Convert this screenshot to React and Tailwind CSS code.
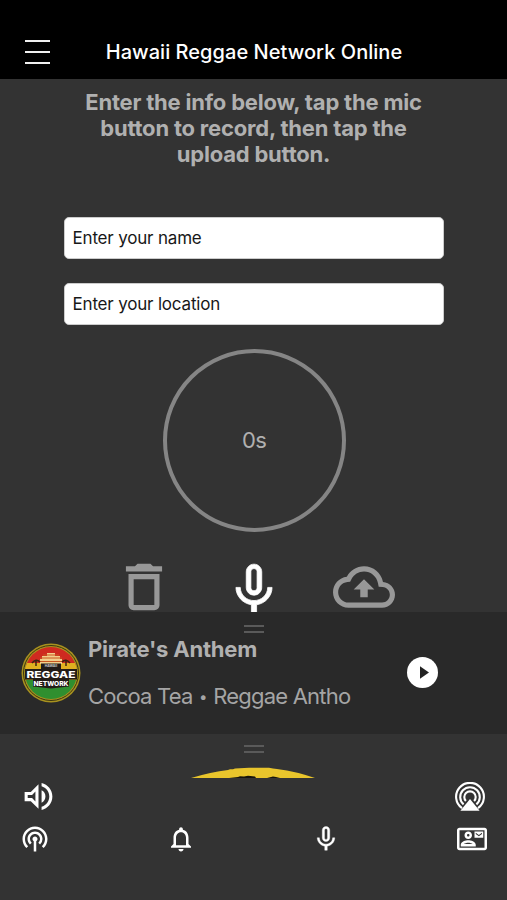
import React from "react";
import {
  MdNotificationsNone,
  MdOutlineContactMail,
  MdOutlineVolumeUp,
  MdPodcasts,
} from "react-icons/md";

const MIC_PATH =
  "M12 14c1.66 0 2.99-1.34 2.99-3L15 5c0-1.66-1.34-3-3-3S9 3.34 9 5v6c0 1.66 1.34 3 3 3zm-1.2-9.1c0-.66.54-1.2 1.2-1.2s1.2.54 1.2 1.2l-.01 6.2c0 .66-.53 1.2-1.19 1.2s-1.2-.54-1.2-1.2V4.9zm6.5 6.1c0 3-2.54 5.1-5.3 5.1S6.7 14 6.7 11H5c0 3.41 2.72 6.23 6 6.72V21h2v-3.28c3.28-.48 6-3.3 6-6.72h-1.7z";

const Grip = () => (
  <div className="w-5 h-[8px] border-y-2 border-[#5a5a5a] mx-auto" />
);

const StationLogo = () => (
  <svg viewBox="0 0 60 60" className="w-[60px] h-[60px] shrink-0">
    <defs>
      <clipPath id="disc">
        <circle cx="30" cy="30" r="26" />
      </clipPath>
    </defs>
    <circle cx="30" cy="30" r="29.5" fill="#a8921f" />
    <circle cx="30" cy="30" r="27.5" fill="none" stroke="#3b3510" strokeWidth="1" />
    <g clipPath="url(#disc)">
      <rect width="60" height="22" fill="#cf2a20" />
      <rect y="20" width="60" height="10" fill="#e0b020" />
      <rect y="37" width="60" height="24" fill="#2f8f2f" />
      <path d="M19 21V16h2v-3h5v-3h8v3h5v3h2v5z" fill="#f2cf8c" />
      <path d="M19 15h22M22 12h16M18 18.5h24" stroke="#c9571f" strokeWidth="1" />
      <path d="M11 20q4-5 8-1M15 17v6M41 19q4-4 8 1M45 17v6" stroke="#3a2412" strokeWidth="1.5" fill="none" />
    </g>
    <path d="M20 20.500h20v5.500h16v10.500h-8v7l-18 2-18-2v-7H4V26h16z" fill="#221c18" />
    <text x="30" y="23.8" textAnchor="middle" fontSize="3.4" fontWeight="700" fill="#ccc" fontFamily="Inter, sans-serif">
      HAWAII
    </text>
    <text x="30" y="35" textAnchor="middle" fontSize="9" fontWeight="800" fill="#fff" fontFamily="Inter, sans-serif" textLength="49" lengthAdjust="spacingAndGlyphs">
      REGGAE
    </text>
    <text x="30" y="43.200" textAnchor="middle" fontSize="6.6" fontWeight="800" fill="#fff" fontFamily="Inter, sans-serif" textLength="35" lengthAdjust="spacingAndGlyphs">
      NETWORK
    </text>
  </svg>
);

const AirplayIcon = () => (
  <svg viewBox="0 0 30 30" className="w-[30px] h-[30px]" fill="none" stroke="#fff" strokeWidth="2.1">
    <path d="M7 26.1A13.9 13.9 0 1 1 23 26.1" />
    <path d="M8.6 22.4A9.8 9.8 0 1 1 21.4 22.4" />
    <path d="M10.9 19A5.7 5.7 0 1 1 19.1 19" />
    <path d="M15 17L24.6 28.7H5.4z" fill="#fff" stroke="none" />
  </svg>
);

const ActionIcon = ({ d, className = "w-[62px] h-[62px]" }) => (
  <svg viewBox="0 0 24 24" className={className} fill="currentColor">
    <path d={d} />
  </svg>
);

const Header = () => (
  <header className="h-[79px] bg-black relative flex items-end justify-center">
    <button className="absolute left-[25px] top-[40px] w-[25px] flex flex-col gap-[9px]">
      <span className="h-[2px] w-full bg-[#f0f0f0]" />
      <span className="h-[2px] w-full bg-[#f0f0f0]" />
      <span className="h-[2px] w-full bg-[#f0f0f0]" />
    </button>
    <h1 className="text-white font-medium text-[20px] leading-6 mb-[15px] pl-[1px] whitespace-nowrap tracking-[0.04px]">
      Hawaii Reggae Network Online
    </h1>
  </header>
);

const Recorder = () => (
  <main className="h-[533px] overflow-hidden flex flex-col items-center">
    <p className="mt-[10px] text-center font-bold text-[22px] leading-[26px] text-[#b0b0b0] whitespace-nowrap tracking-[-0.2px]">
      Enter the info below, tap the mic
      <br />
      button to record, then tap the
      <br />
      upload button.
    </p>
    <input
      placeholder="Enter your name"
      className="mt-[49.6px] w-[380px] h-[42px] shrink-0 rounded-[5px] bg-white border border-[#ccc] px-2 text-[17px] tracking-[-0.18px] placeholder:text-[#181818]"
    />
    <input
      placeholder="Enter your location"
      className="mt-6 w-[380px] h-[42px] shrink-0 rounded-[5px] bg-white border border-[#ccc] px-2 text-[17px] tracking-[-0.18px] placeholder:text-[#181818]"
    />
    <div className="mt-[24px] ml-px w-[183px] h-[183px] shrink-0 rounded-full border-4 border-[#858585] flex items-center justify-center text-[22px] tracking-[-0.8px] text-[#b0b0b0]">
      0s
    </div>
    <div className="mt-6 flex gap-12 text-[#989898]">
      <ActionIcon d="M6 19c0 1.1.9 2 2 2h8c1.1 0 2-.9 2-2V7H6v12zM8 9h8v10H8V9zm7.5-5l-1-1h-5l-1 1H5v2h14V4h-3.5z" />
      <ActionIcon
        className="w-[62px] h-[62px] mt-[3px] text-white stroke-white stroke-[0.3]"
        d={MIC_PATH}
      />
      <ActionIcon d="M19.35 10.04C18.67 6.59 15.64 4 12 4 9.11 4 6.6 5.64 5.35 8.04 2.34 8.36 0 10.91 0 14c0 3.31 2.69 6 6 6h13c2.76 0 5-2.24 5-5 0-2.64-2.05-4.78-4.65-4.96zM19 18H6c-2.21 0-4-1.79-4-4 0-2.05 1.53-3.76 3.56-3.97l1.07-.11.5-.95C8.08 7.14 9.94 6 12 6c2.62 0 4.88 1.86 5.39 4.43l.3 1.5 1.53.11c1.56.1 2.78 1.41 2.78 2.96 0 1.65-1.35 3-3 3zM8 13h2.55v3h2.9v-3H16l-4-4z" />
    </div>
  </main>
);

const MiniPlayer = () => (
  <section className="h-[122px] bg-[#292929] pt-[13px]">
    <Grip />
    <div className="flex items-center pl-[21px] pr-[69px] mt-[3px]">
      <StationLogo />
      <div className="ml-[7px] flex-1 whitespace-nowrap text-[#b0b0b0] text-[22px] leading-[26px]">
        <h2 className="font-bold tracking-[-0.2px]">Pirate's Anthem</h2>
        <p className="mt-[21px] text-[#a5a5a5] tracking-[-0.78px]">
          Cocoa Tea <span className="text-[15px] align-[2px] mx-px">•</span> Reggae Antho
        </p>
      </div>
      <button className="relative -top-px w-[31px] h-[31px] rounded-full bg-white flex items-center justify-center">
        <svg viewBox="0 0 10 14" className="w-[9px] h-[13px] ml-[3px]">
          <path d="M0 0l10 7-10 7z" fill="#222" />
        </svg>
      </button>
    </div>
  </section>
);

const BottomPanel = () => (
  <footer className="h-[166px] pt-[11px] text-white">
    <Grip />
    <svg viewBox="0 0 124 12" className="block w-[124px] h-[12px] mt-[14px] ml-[191px]">
      <path d="M0 11Q20 5 37 3l2-.8 3 .1 2-.8 14-.7h20l4 .8 4 .3Q106 4.500 124 11z" fill="#e9c52c" />
      <path d="M38 11l9-1 2-.7 4 .2 4-.7 7 .7 1 1.500zM76 11l6-1.500 3 .4 4 1.100z" fill="#16140c" />
    </svg>
    <div className="flex items-center justify-between pl-5 pr-[22px] -mt-px">
      <MdOutlineVolumeUp className="w-[37px] h-[37px]" />
      <AirplayIcon />
    </div>
    <nav className="flex items-center justify-between pl-5 pr-[20px] mt-[9px]">
      <MdPodcasts className="w-[30px] h-[30px]" />
      <MdNotificationsNone className="w-[30px] h-[30px]" />
      <ActionIcon d={MIC_PATH} className="w-[30px] h-[30px] stroke-white stroke-[0.3]" />
      <MdOutlineContactMail className="w-[30px] h-[30px]" />
    </nav>
  </footer>
);

export default function App() {
  return (
    <div className="w-full h-[900px] overflow-hidden bg-[#333333] font-['Inter',sans-serif]">
      <Header />
      <Recorder />
      <MiniPlayer />
      <BottomPanel />
    </div>
  );
}
